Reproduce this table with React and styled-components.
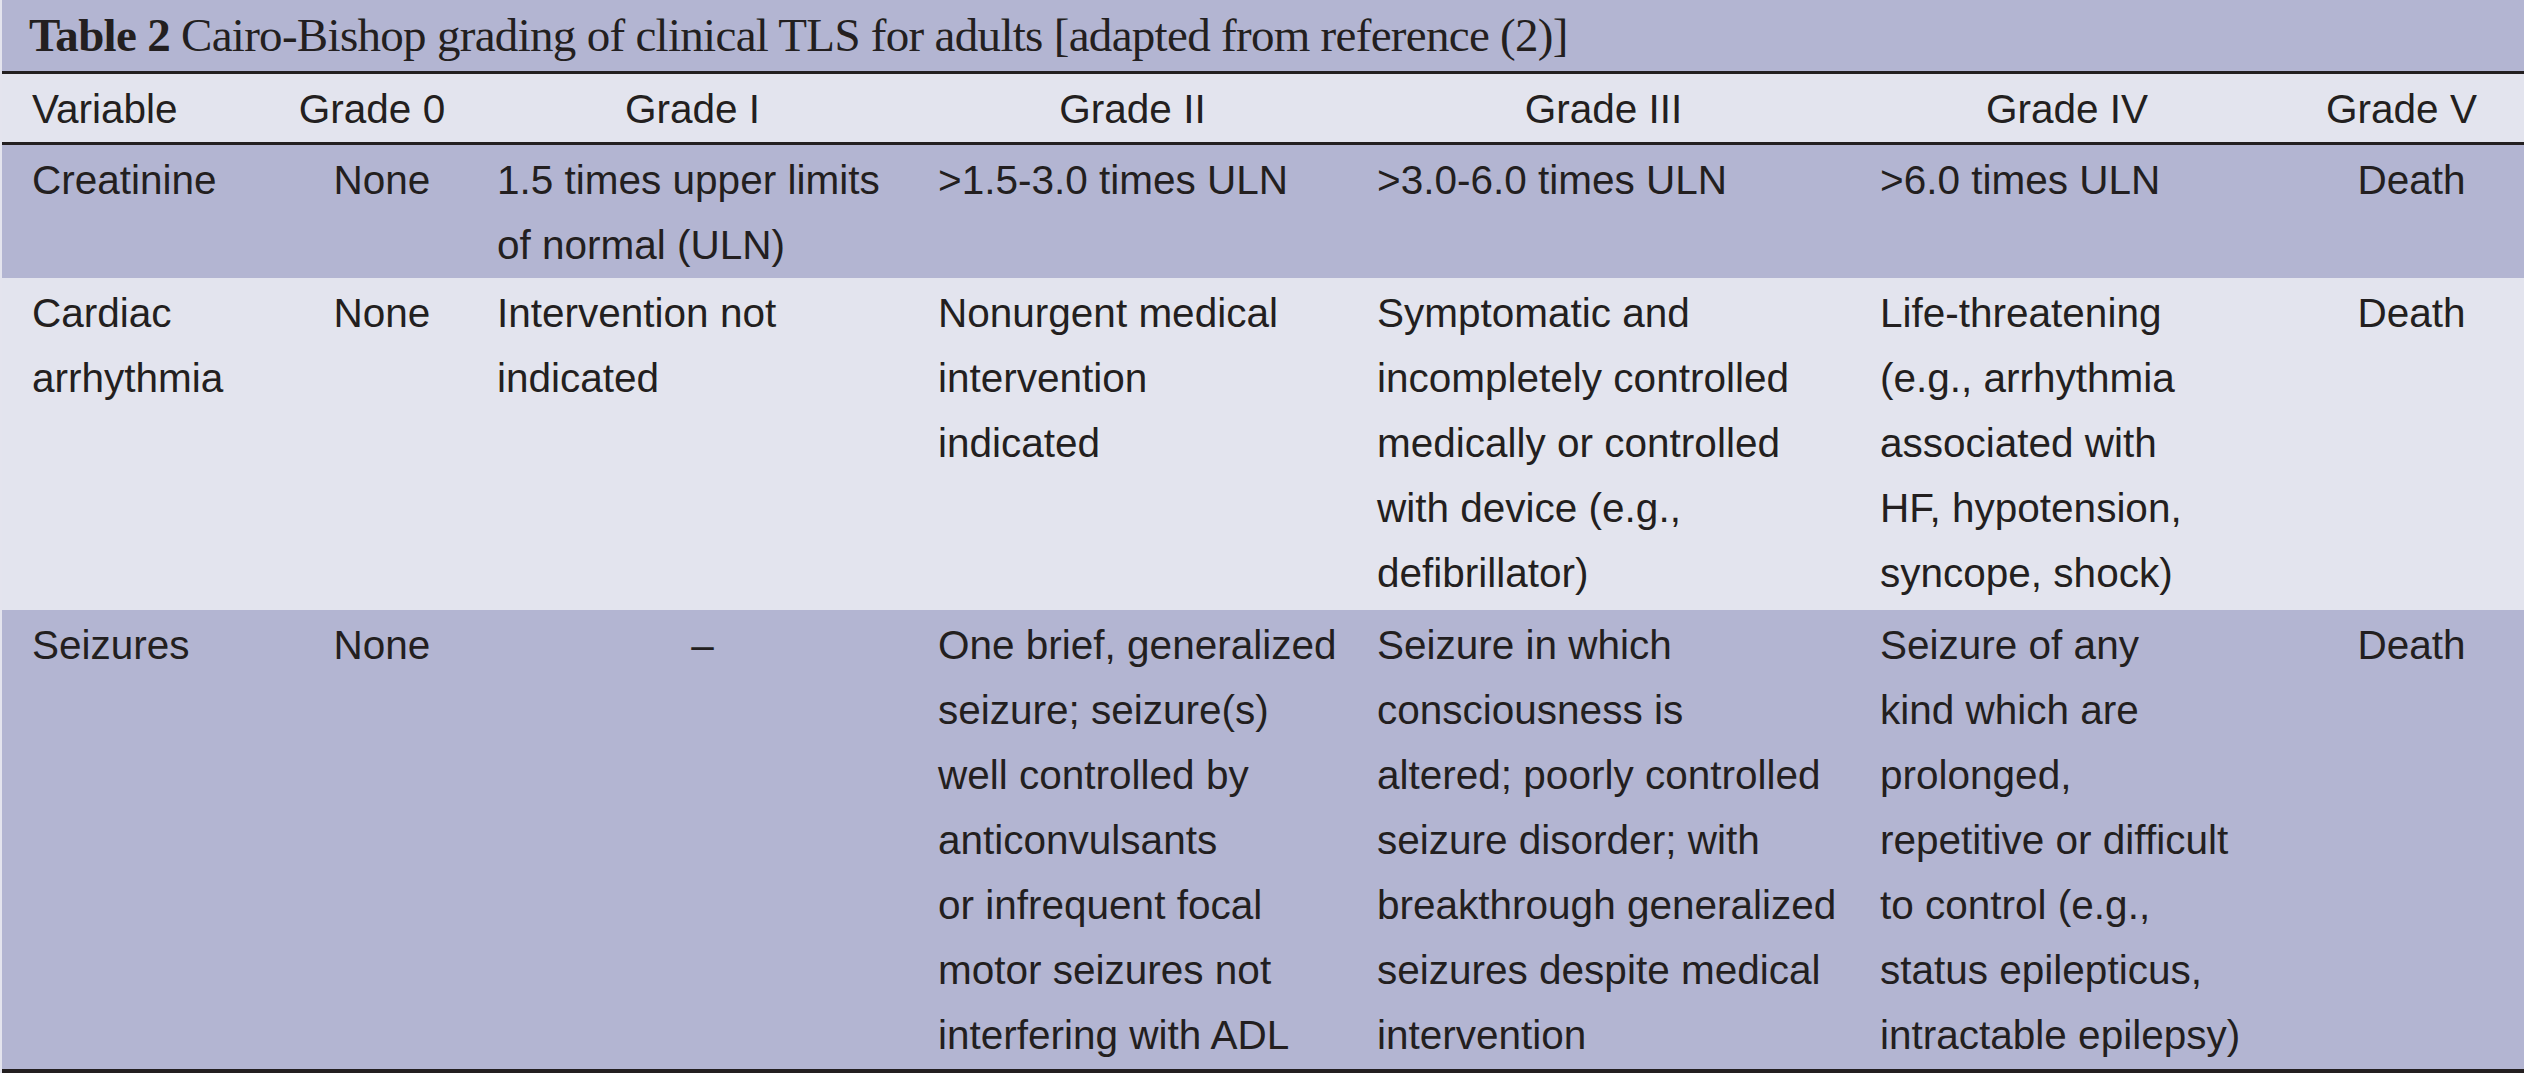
import React from "react";
import styled, { createGlobalStyle } from "styled-components";

const GlobalStyle = createGlobalStyle`
    html, body {
        margin: 0;
        padding: 0;
        background: #e4e4ee;
    }
`;

const columns = "270px 200px 441px 439px 503px 424px 245px";

const Wrapper = styled.div`
    margin-left: 2px;
    width: 2522px;
    color: #231f20;
    font-family: "Liberation Sans", Arial, sans-serif;
`;

const Caption = styled.div`
    height: 71px;
    line-height: 71px;
    padding-left: 27px;
    background: #b3b5d2;
    border-bottom: 3px solid #231f20;
    font-family: "Liberation Serif", "Times New Roman", serif;
    font-size: 47px;
    letter-spacing: -0.7px;
    white-space: nowrap;

    strong {
        font-weight: bold;
    }
`;

const Row = styled.div`
    display: grid;
    grid-template-columns: ${columns};
    background: ${(p) => (p.$light ? "#e3e4ee" : "#b3b5d2")};
    padding-top: 3px;
    padding-bottom: ${(p) => p.$padBottom || 0}px;
    border-bottom: ${(p) => (p.$rule ? `${p.$rule}px solid #231f20` : "none")};
`;

const Cell = styled.div`
    font-size: 40.5px;
    line-height: 65px;
    white-space: nowrap;
    text-align: ${(p) => p.$align || "left"};
    padding: ${(p) =>
        p.$first ? "0 0 0 30px" : p.$align === "center" ? "0 5px 0 25px" : "0 0 0 25px"};
`;

const HeadCell = styled(Cell)`
    padding: ${(p) => (p.$first ? "0 0 0 30px" : "0")};
`;

const Line = styled.div``;

const headers = ["Variable", "Grade 0", "Grade I", "Grade II", "Grade III", "Grade IV", "Grade V"];

const rows = [
    {
        light: false,
        padBottom: 0,
        cells: [
            ["Creatinine"],
            ["None"],
            ["1.5 times upper limits", "of normal (ULN)"],
            [">1.5-3.0 times ULN"],
            [">3.0-6.0 times ULN"],
            [">6.0 times ULN"],
            ["Death"],
        ],
    },
    {
        light: true,
        padBottom: 4,
        cells: [
            ["Cardiac", "arrhythmia"],
            ["None"],
            ["Intervention not", "indicated"],
            ["Nonurgent medical", "intervention", "indicated"],
            [
                "Symptomatic and",
                "incompletely controlled",
                "medically or controlled",
                "with device (e.g.,",
                "defibrillator)",
            ],
            [
                "Life-threatening",
                "(e.g., arrhythmia",
                "associated with",
                "HF, hypotension,",
                "syncope, shock)",
            ],
            ["Death"],
        ],
    },
    {
        light: false,
        padBottom: 1,
        rule: 4,
        cells: [
            ["Seizures"],
            ["None"],
            ["–"],
            [
                "One brief, generalized",
                "seizure; seizure(s)",
                "well controlled by",
                "anticonvulsants",
                "or infrequent focal",
                "motor seizures not",
                "interfering with ADL",
            ],
            [
                "Seizure in which",
                "consciousness is",
                "altered; poorly controlled",
                "seizure disorder; with",
                "breakthrough generalized",
                "seizures despite medical",
                "intervention",
            ],
            [
                "Seizure of any",
                "kind which are",
                "prolonged,",
                "repetitive or difficult",
                "to control (e.g.,",
                "status epilepticus,",
                "intractable epilepsy)",
            ],
            ["Death"],
        ],
    },
];

const alignFor = (col, lines) => {
    if (col === 1 || col === 6) return "center";
    if (lines.length === 1 && lines[0] === "–") return "center";
    return "left";
};

const App = () => (
    <>
        <GlobalStyle />
        <Wrapper>
            <Caption>
                <strong>Table 2</strong> Cairo-Bishop grading of clinical TLS for adults [adapted from reference (2)]
            </Caption>
            <Row $light $rule={3}>
                {headers.map((h, i) => (
                    <HeadCell key={h} $first={i === 0} $align={i === 0 ? "left" : "center"}>
                        {h}
                    </HeadCell>
                ))}
            </Row>
            {rows.map((row, r) => (
                <Row key={r} $light={row.light} $padBottom={row.padBottom} $rule={row.rule}>
                    {row.cells.map((lines, c) => (
                        <Cell key={c} $first={c === 0} $align={alignFor(c, lines)}>
                            {lines.map((t, k) => (
                                <Line key={k}>{t}</Line>
                            ))}
                        </Cell>
                    ))}
                </Row>
            ))}
        </Wrapper>
    </>
);

export default App;
